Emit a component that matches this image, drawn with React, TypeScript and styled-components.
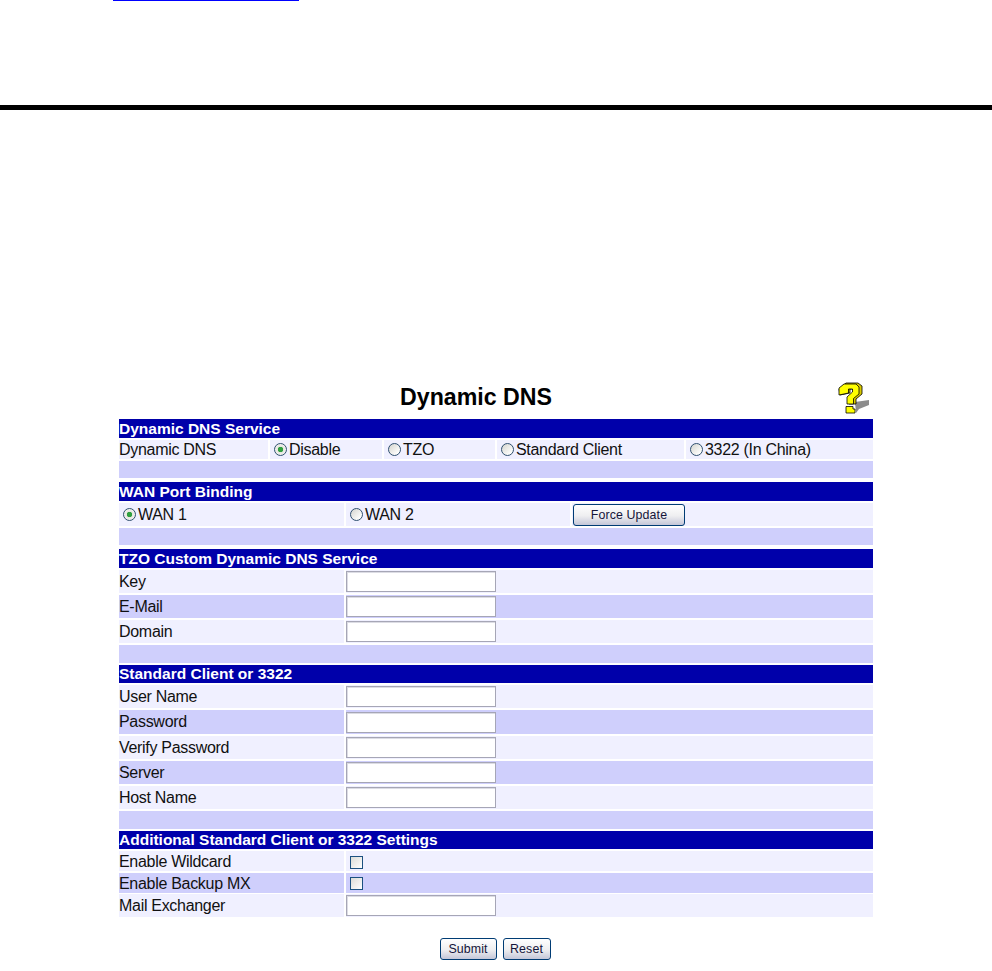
import React from "react";
import styled, { createGlobalStyle } from "styled-components";

const GlobalStyle = createGlobalStyle`
  html, body {
    margin: 0;
    padding: 0;
    background: #fff;
    font-family: "Liberation Sans", Arial, sans-serif;
    color: #111;
  }
`;

const Page = styled.div`
  width: 992px;
  height: 971px;
  overflow: hidden;
`;

const CutLink = styled.a`
  display: block;
  width: 186px;
  height: 1px;
  margin-left: 113px;
  background: #0000ff;
`;

const Rule = styled.hr`
  height: 5px;
  margin: 104px 0 0;
  border: 0;
  background: #000;
`;

const Main = styled.main`
  width: 754px;
  margin: 265px 0 0 119px;
`;

const TitleRow = styled.div`
  display: grid;
  grid-template-columns: 281px auto 1fr;
  align-items: center;
  height: 44px;
`;

const Title = styled.h1`
  grid-column: 2;
  margin: 0;
  font-size: 23.2px;
  font-weight: bold;
  color: #000;
`;

const HelpIcon = styled.svg`
  justify-self: end;
  width: 32px;
  height: 32px;
  margin-right: 3px;
  margin-top: 2px;
`;

const Section = styled.section<{ $top?: number }>`
  display: flex;
  flex-direction: column;
  gap: 2px;
  margin-top: ${(p) => p.$top ?? 0}px;
`;

const Header = styled.h2<{ $h?: number }>`
  height: ${(p) => p.$h ?? 19}px;
  margin: 0;
  background: #0000aa;
  color: #fff;
  font-size: 15.5px;
  font-weight: bold;
  line-height: ${(p) => p.$h ?? 19}px;
`;

const Spacer = styled.div<{ $h?: number }>`
  height: ${(p) => p.$h ?? 18}px;
  background: #cfcffc;
`;

const Row = styled.div<{ $cols: string; $h?: number }>`
  display: grid;
  grid-template-columns: ${(p) => p.$cols};
  column-gap: 2px;
  height: ${(p) => p.$h ?? 23}px;
`;

const Cell = styled.div<{ $dark?: boolean; $drop?: boolean }>`
  box-sizing: border-box;
  display: flex;
  align-items: center;
  min-width: 0;
  padding-top: ${(p) => (p.$drop ? 2 : 0)}px;
  background: ${(p) => (p.$dark ? "#cfcffc" : "#f0f0ff")};
  font-size: 16px;
  letter-spacing: -0.3px;
  white-space: nowrap;
`;

const Radio = styled.input.attrs({ type: "radio" })`
  appearance: none;
  flex: none;
  width: 13px;
  height: 13px;
  margin: 0 2px 0 4px;
  border: 1px solid #2f4f6f;
  border-radius: 50%;
  background: linear-gradient(135deg, #d4d4ce, #fdfdfb 80%);

  &:checked {
    background: radial-gradient(circle, #30a040 0 2.5px, #e6e6e0 3px, #fdfdfb);
  }
`;

const Check = styled.input.attrs({ type: "checkbox" })`
  appearance: none;
  width: 13px;
  height: 13px;
  margin: 0 0 0 4px;
  border: 1px solid #1c5180;
  background: linear-gradient(135deg, #dcdcd7, #fff);
`;

const Field = styled.input`
  box-sizing: border-box;
  width: 150px;
  height: 21px;
  margin: 0;
  padding: 0 2px;
  border: 1px solid #a6a6b6;
  box-shadow: inset 1px 1px 0 #dcdce4;
  background: #fff;
  outline: 0;
`;

const Btn = styled.button<{ $w: number; $ml?: number }>`
  box-sizing: border-box;
  width: ${(p) => p.$w}px;
  height: 22px;
  margin-left: ${(p) => p.$ml ?? 0}px;
  padding: 0;
  border: 1px solid #003c74;
  border-radius: 3px;
  background: linear-gradient(#ffffff, #eeeef0 55%, #c4c6d8);
  color: #15153a;
  font-family: "Liberation Sans", Arial, sans-serif;
  font-size: 12.4px;
  letter-spacing: 0.1px;
`;

const Actions = styled.div`
  display: flex;
  justify-content: center;
  gap: 6px;
  margin: 21px 0 0 -2px;
`;

const FIELD_COLS = "225px 527px";

type Line = { label: string; kind?: "check"; h?: number };

function FormRows({ lines }: { lines: Line[] }) {
  return (
    <>
      {lines.map((line, i) => {
        const isCheck = line.kind === "check";
        return (
          <Row key={line.label} $cols={FIELD_COLS} $h={line.h}>
            <Cell $dark={i % 2 === 1} $drop={isCheck}>{line.label}</Cell>
            <Cell $dark={i % 2 === 1} $drop={isCheck}>{isCheck ? <Check /> : <Field />}</Cell>
          </Row>
        );
      })}
    </>
  );
}

function QuestionIcon() {
  return (
    <HelpIcon viewBox="0 0 32 32">
      <path d="M17 20 L31 18 V23 L21 27 L18 31 Z" fill="#8c8c8c" />
      <path
        d="M8 1 H20 L24 4 V12 L18 17 V22 H11 V15 L16 10 V7 H12 V11 L2 13 L1 7 Z"
        fill="#d8c800"
        stroke="#000"
        strokeWidth="0.8"
      />
      <path
        d="M6 2 H18 L21 5 V12 L15.5 16.5 V22 H9 V15 L14.5 10 V7 H10.5 V11 L1 13 V6 Z"
        fill="#ffff00"
        stroke="#000"
        strokeWidth="0.8"
      />
      <path d="M8 24.5 H15 V27 H17 V31 H8 Z" fill="#ffff00" stroke="#000" strokeWidth="0.8" />
    </HelpIcon>
  );
}

export default function App() {
  return (
    <Page>
      <GlobalStyle />
      <CutLink href="#" aria-label="link" />
      <Rule />
      <Main>
        <TitleRow>
          <Title>Dynamic DNS</Title>
          <QuestionIcon />
        </TitleRow>

        <Section>
          <Header>Dynamic DNS Service</Header>
          <Row $cols="149px 112px 111px 187px 187px" $h={19}>
            <Cell>Dynamic DNS</Cell>
            <Cell>
              <Radio name="svc" defaultChecked />
              Disable
            </Cell>
            <Cell>
              <Radio name="svc" />
              TZO
            </Cell>
            <Cell>
              <Radio name="svc" />
              Standard Client
            </Cell>
            <Cell>
              <Radio name="svc" />
              3322 (In China)
            </Cell>
          </Row>
          <Spacer $h={17} />
        </Section>

        <Section $top={4}>
          <Header>WAN Port Binding</Header>
          <Row $cols="225px 224px 301px">
            <Cell>
              <Radio name="wan" defaultChecked />
              WAN 1
            </Cell>
            <Cell>
              <Radio name="wan" />
              WAN 2
            </Cell>
            <Cell>
              <Btn type="button" $w={112} $ml={1}>Force Update</Btn>
            </Cell>
          </Row>
          <Spacer $h={17} />
        </Section>

        <Section $top={4}>
          <Header>TZO Custom Dynamic DNS Service</Header>
          <FormRows lines={[{ label: "Key" }, { label: "E-Mail" }, { label: "Domain" }]} />
          <Spacer />
        </Section>

        <Section $top={2}>
          <Header $h={18}>Standard Client or 3322</Header>
          <FormRows
            lines={[
              { label: "User Name" },
              { label: "Password", h: 24 },
              { label: "Verify Password" },
              { label: "Server" },
              { label: "Host Name" },
            ]}
          />
          <Spacer />
        </Section>

        <Section $top={2}>
          <Header $h={18}>Additional Standard Client or 3322 Settings</Header>
          <FormRows
            lines={[
              { label: "Enable Wildcard", kind: "check", h: 19.5 },
              { label: "Enable Backup MX", kind: "check", h: 19.5 },
              { label: "Mail Exchanger" },
            ]}
          />
        </Section>

        <Actions>
          <Btn type="button" $w={57}>Submit</Btn>
          <Btn type="button" $w={48}>Reset</Btn>
        </Actions>
      </Main>
    </Page>
  );
}
